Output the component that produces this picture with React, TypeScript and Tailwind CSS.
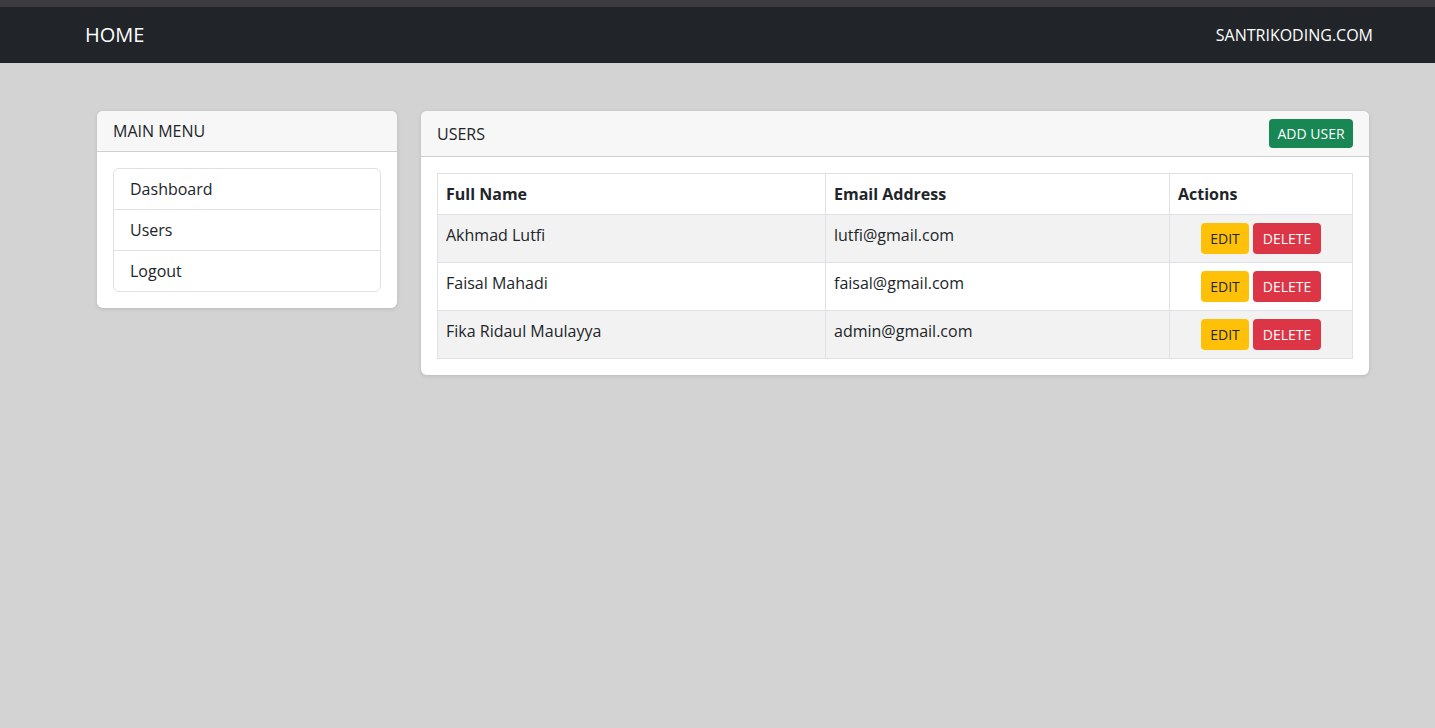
import React from "react";

const users = [
  { name: "Akhmad Lutfi", email: "lutfi@gmail.com" },
  { name: "Faisal Mahadi", email: "faisal@gmail.com" },
  { name: "Fika Ridaul Maulayya", email: "admin@gmail.com" },
];

export default function App() {
  return (
    <div
      className="min-h-[728px] bg-[#d3d3d3] text-[#212529]"
      style={{ fontFamily: '"Open Sans", "Noto Sans", sans-serif' }}
    >
      <div className="h-[7px] bg-[#3c3c3e]" />
      <nav className="h-[56px] bg-[#212529] flex items-center justify-between pl-[85px] pr-[62px]">
        <span className="text-white text-[20px]">HOME</span>
        <span className="text-white text-[16px]">SANTRIKODING.COM</span>
      </nav>
      <div className="pt-[48px] pl-[97px] flex gap-[24px] items-start">
        <div className="w-[300px] bg-white rounded-[6px] shadow-[0_1px_4px_rgba(0,0,0,0.12)]">
          <div className="h-[41px] px-[16px] flex items-center bg-[#f7f7f7] rounded-t-[6px] border-b border-[#cfcfcf] text-[16px]">
            MAIN MENU
          </div>
          <div className="p-[16px]">
            <div className="border border-[#dee2e6] rounded-[6px]">
              {["Dashboard", "Users", "Logout"].map((t, i) => (
                <div
                  key={t}
                  className={`px-[16px] flex items-center text-[16px] ${i < 2 ? "h-[41px] border-b border-[#dee2e6]" : "h-[40px]"}`}
                >
                  {t}
                </div>
              ))}
            </div>
          </div>
        </div>
        <div className="w-[948px] bg-white rounded-[6px] shadow-[0_1px_4px_rgba(0,0,0,0.12)]">
          <div className="h-[46px] px-[16px] flex items-center justify-between bg-[#f7f7f7] rounded-t-[6px] border-b border-[#cfcfcf]">
            <span className="text-[16px]">USERS</span>
            <button className="h-[29px] w-[84px] rounded-[4px] bg-[#198754] text-white text-[14px] flex items-center justify-center">
              ADD USER
            </button>
          </div>
          <div className="p-[16px]">
            <table className="w-full border-collapse text-[16px]">
              <thead>
                <tr className="h-[41px]">
                  <th className="w-[388px] border border-[#dee2e6] px-[8px] text-left font-bold">Full Name</th>
                  <th className="w-[344px] border border-[#dee2e6] px-[8px] text-left font-bold">Email Address</th>
                  <th className="border border-[#dee2e6] px-[8px] text-left font-bold">Actions</th>
                </tr>
              </thead>
              <tbody>
                {users.map((u, i) => (
                  <tr key={u.email} className={`h-[48px] ${i % 2 === 0 ? "bg-[#f2f2f2]" : "bg-white"}`}>
                    <td className="border border-[#dee2e6] px-[8px] align-top pt-[8px]">{u.name}</td>
                    <td className="border border-[#dee2e6] px-[8px] align-top pt-[8px]">{u.email}</td>
                    <td className="border border-[#dee2e6] px-[8px] py-[8px]">
                      <div className="flex justify-center gap-[4px]">
                        <button className="h-[31px] w-[48px] rounded-[4px] bg-[#ffc107] text-[#212529] text-[14px] flex items-center justify-center">
                          EDIT
                        </button>
                        <button className="h-[31px] w-[68px] rounded-[4px] bg-[#dc3545] text-white text-[14px] flex items-center justify-center">
                          DELETE
                        </button>
                      </div>
                    </td>
                  </tr>
                ))}
              </tbody>
            </table>
          </div>
        </div>
      </div>
    </div>
  );
}
